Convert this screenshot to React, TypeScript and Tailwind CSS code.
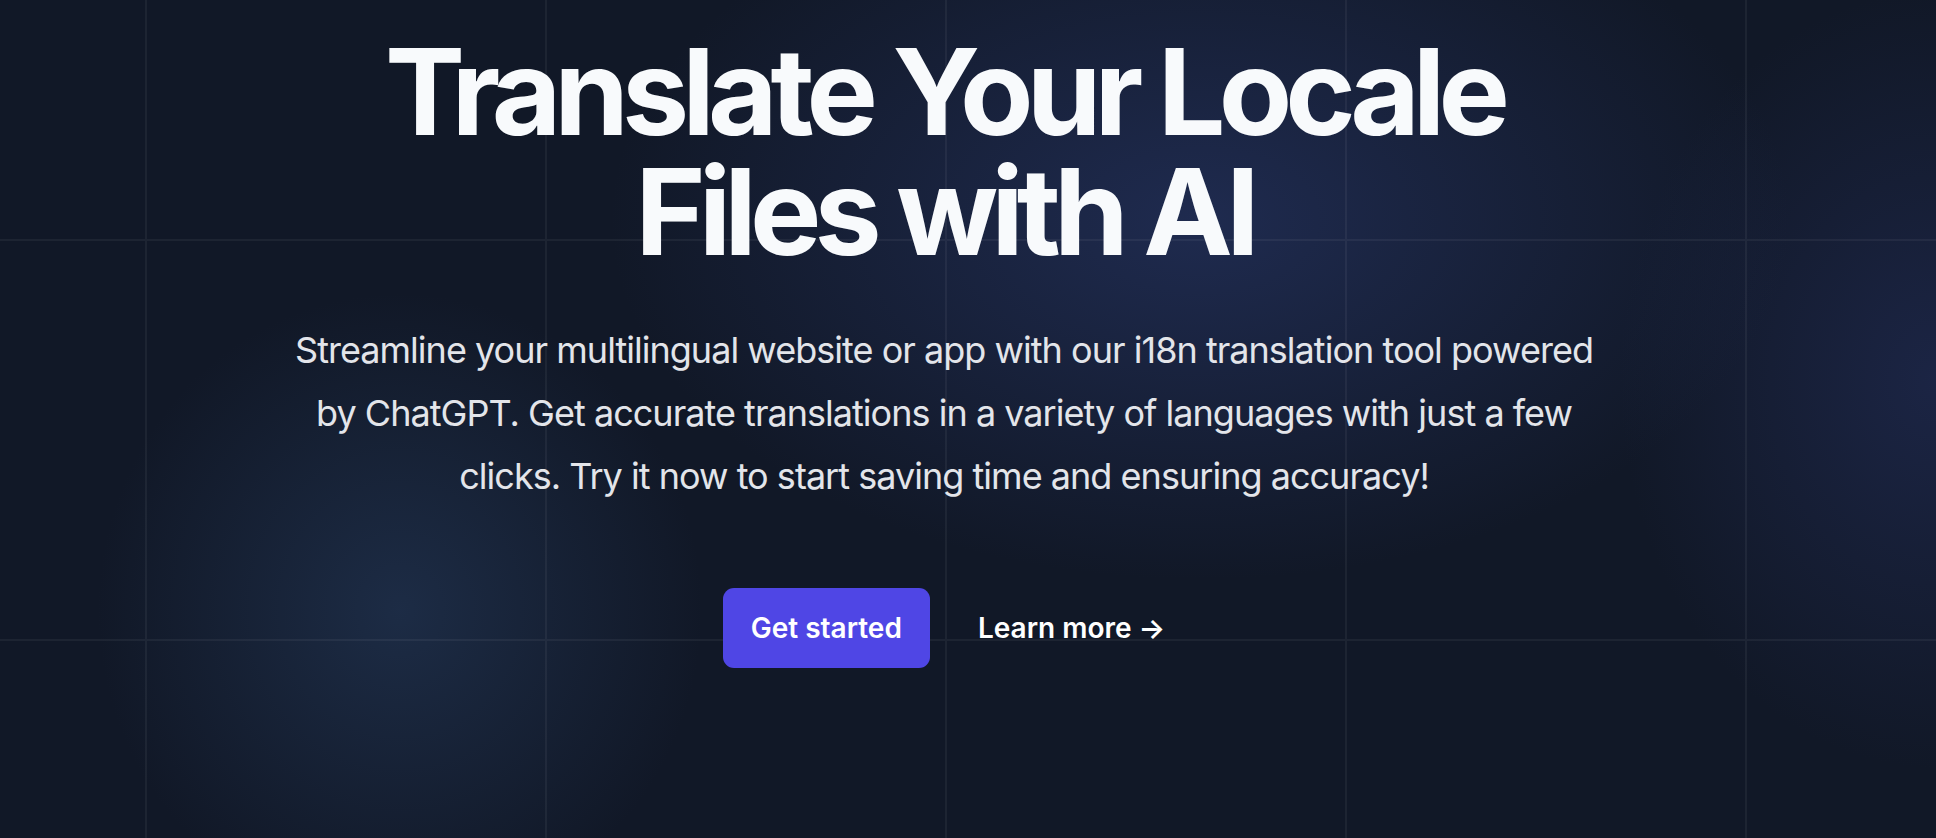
import React from 'react';

const GridLines: React.FC = () => (
  <svg className="absolute inset-0 h-full w-full" aria-hidden="true">
    <defs>
      <pattern id="hero-grid" width="400" height="400" x="145" y="239" patternUnits="userSpaceOnUse">
        <path d="M1 400V1H400" fill="none" stroke="rgba(255,255,255,0.05)" strokeWidth="2" />
      </pattern>
    </defs>
    <rect width="100%" height="100%" fill="url(#hero-grid)" />
  </svg>
);

export default function App() {
  return (
    <div className="relative h-[838px] w-full overflow-hidden bg-[#111827] bg-[radial-gradient(ellipse_820px_500px_at_1200px_220px,rgba(42,58,112,0.55),transparent_72%),radial-gradient(ellipse_420px_440px_at_400px_610px,rgba(38,60,94,0.55),transparent_72%),radial-gradient(ellipse_440px_540px_at_1936px_380px,rgba(40,52,104,0.45),transparent_72%)] font-['Inter',sans-serif]">
      <GridLines />

      {/* Hero */}
      <div className="relative flex flex-col items-center pr-[48px] pt-[32px] text-center">
        <h1 className="text-[120px] font-bold leading-[120px] tracking-[-0.058em] text-[#f8fafc]">
          Translate Your Locale
          <br />
          Files with AI
        </h1>
        <p className="mt-[47px] max-w-[1320px] text-[36px] leading-[63px] tracking-[-0.027em] text-[#e3e5ea]">
          Streamline your multilingual website or app with our i18n translation tool powered by ChatGPT. Get
          accurate translations in a variety of languages with just a few clicks. Try it now to start saving time
          and ensuring accuracy!
        </p>
        <div className="mt-[80px] flex items-center gap-x-[48px]">
          <a
            href="#"
            className="rounded-[11px] bg-[#4f46e5] px-[28px] py-[20px] text-[28px] font-semibold leading-[40px] text-white"
          >
            Get started
          </a>
          <a href="#" className="text-[28px] font-semibold leading-[48px] text-white">
            Learn more <span aria-hidden="true">→</span>
          </a>
        </div>
      </div>
    </div>
  );
}
